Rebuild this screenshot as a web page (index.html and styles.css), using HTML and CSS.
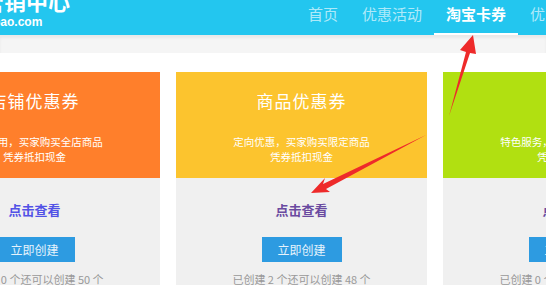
FILE: index.html
```html
<!DOCTYPE html>
<html>
<head>
<meta name="viewport" content="width=device-width, initial-scale=1.0">
<title>淘宝卡券</title>
<link rel="stylesheet" href="styles.css">
</head>
<body>

<div class="header">
  <div class="logo">
    <div class="logo-name">营销中心</div>
    <div class="logo-url">taobao.com</div>
  </div>
  <ul class="nav">
    <li>首页</li>
    <li>优惠活动</li>
    <li class="active">淘宝卡券</li>
    <li>优惠工具</li>
  </ul>
</div>
<div class="subbar"></div>

<div class="cards">
  <div class="card">
    <div class="card-top orange">
      <div class="card-title">店铺优惠券</div>
      <div class="card-desc">全店通用，买家购买全店商品<br>凭券抵扣现金</div>
    </div>
    <div class="card-body">
      <a class="more blue">点击查看</a>
      <button class="create" type="button">立即创建</button>
      <div class="count">已创建 0 个还可以创建 50 个</div>
    </div>
  </div>
  <div class="card">
    <div class="card-top yellow">
      <div class="card-title">商品优惠券</div>
      <div class="card-desc">定向优惠，买家购买限定商品<br>凭券抵扣现金</div>
    </div>
    <div class="card-body">
      <a class="more">点击查看</a>
      <button class="create" type="button">立即创建</button>
      <div class="count">已创建 2 个还可以创建 48 个</div>
    </div>
  </div>
  <div class="card">
    <div class="card-top green">
      <div class="card-title">红包</div>
      <div class="card-desc">特色服务，买家购买指定商品<br>凭卡享受包邮</div>
    </div>
    <div class="card-body">
      <a class="more">点击查看</a>
      <button class="create" type="button">立即创建</button>
      <div class="count">已创建 0 个还可以创建 50 个</div>
    </div>
  </div>
</div>

<!-- red annotation arrows drawn over the screenshot -->
<svg class="arrows" width="546" height="285" viewBox="0 0 546 285">
  <polygon points="449,116 466,52 460,50 473,35 476,54 470,53" fill="#ee2a2a"/>
  <polygon points="426,135 323,184 325,178 311,193 330,192 326,189" fill="#ee2a2a"/>
</svg>

</body>
</html>
```

FILE: styles.css
```css
body {
  margin: 0;
  font-family: "Liberation Sans", "Noto Sans CJK SC", sans-serif;
  overflow: hidden;
  background: #fff;
}

.header {
  height: 35px;
  background-color: #23c6ef;
  display: flex;
  justify-content: space-between;
  overflow: hidden;
}

.logo {
  color: #fff;
  font-weight: bold;
}

.logo-name {
  font-size: 22px;
  line-height: 22px;
  margin: -8px 0 0 -18px;
}

.logo-url {
  font-size: 12px;
  line-height: 12px;
  margin: 2px 0 0 -25px;
}

.nav {
  list-style: none;
  margin: 0 -56px 0 0;
  padding: 0;
  display: flex;
}

.nav li {
  padding: 6px 12px 0;
  font-size: 15px;
  line-height: 15px;
  color: rgba(255, 255, 255, 0.65);
  border-bottom: 2px solid transparent;
  height: 27px;
  white-space: nowrap;
  font-family: "Noto Sans CJK SC", sans-serif;
}

.nav li.active {
  color: #fff;
  font-weight: bold;
  border-bottom-color: #fff;
}

.subbar {
  height: 18px;
  background: #f5f5f5;
  box-shadow: inset 0 3px 3px rgba(0, 0, 0, 0.05);
}

.cards {
  display: flex;
  gap: 16px;
  margin: 19px 0 0 -91px;
}

.card {
  flex: 0 0 251px;
  text-align: center;
}

.card-top {
  height: 106px;
  padding-top: 17px;
  box-sizing: border-box;
  color: #fff;
}

.orange { background-color: #ff7f2b; }
.yellow { background-color: #fcc42e; }
.green { background-color: #b1e011; }

.card-title {
  font-size: 17px;
  line-height: 24px;
  font-family: "Noto Sans CJK SC", serif;
  letter-spacing: 1px;
}

.card-desc {
  margin-top: 21px;
  font-size: 10.5px;
  line-height: 15px;
  font-family: "Noto Sans CJK SC", sans-serif;
}

.card-body {
  background: #f0f0f0;
  height: 140px;
  padding-top: 23px;
  box-sizing: border-box;
}

.more {
  display: block;
  font-size: 13px;
  line-height: 18px;
  font-weight: bold;
  color: #6a4aa0;
  font-family: "Noto Sans CJK SC", sans-serif;
}

.more.blue {
  color: #5252e6;
}

.create {
  display: block;
  margin: 18px auto 0;
  width: 80px;
  height: 25px;
  border: none;
  background-color: #2d9be1;
  color: #e6f3fc;
  font-size: 12px;
  font-family: "Noto Sans CJK SC", sans-serif;
  padding: 0;
}

.count {
  margin-top: 10px;
  font-size: 11px;
  line-height: 14px;
  color: #999;
  font-family: "Noto Sans CJK SC", sans-serif;
}

.arrows {
  position: absolute;
  left: 0;
  top: 0;
}
```
